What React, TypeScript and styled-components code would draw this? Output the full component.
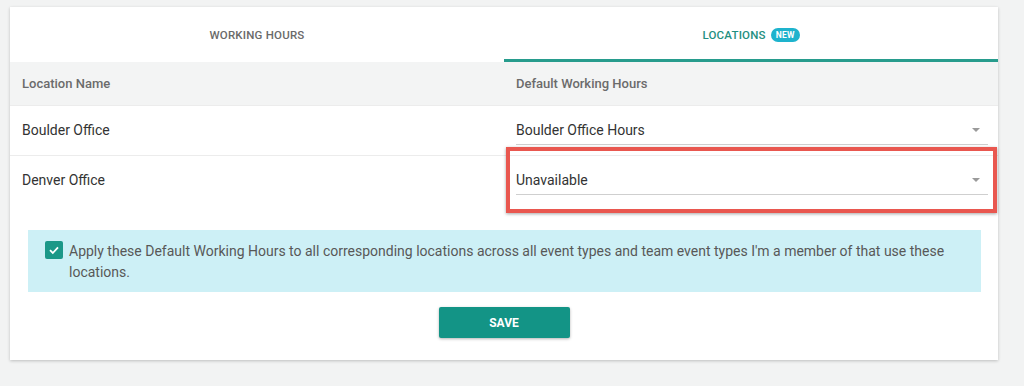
import React from "react";
import styled, { createGlobalStyle } from "styled-components";

const GlobalStyle = createGlobalStyle`
  body {
    margin: 0;
    background: #f2f3f3;
    font-family: Roboto, "Liberation Sans", Arial, sans-serif;
    -webkit-font-smoothing: antialiased;
  }
`;

const Page = styled.div`
  padding: 7px 26px 26px 10px;
`;

const Card = styled.div`
  background: #fff;
  box-shadow: 0 1px 3px rgba(0, 0, 0, 0.22);
  padding-bottom: 22px;
`;

const Tabs = styled.div`
  display: grid;
  grid-template-columns: 1fr 1fr;
`;

const Tab = styled.div<{ $active?: boolean }>`
  height: 55px;
  box-sizing: border-box;
  display: flex;
  align-items: center;
  justify-content: center;
  gap: 5px;
  font-size: 11.5px;
  font-weight: 500;
  letter-spacing: 0.2px;
  text-transform: uppercase;
  color: ${(p) => (p.$active ? "#1f8f81" : "#6a6a6a")};
  border-bottom: 3px solid ${(p) => (p.$active ? "#279c8d" : "transparent")};
  padding-top: 3px;
`;

const Badge = styled.span`
  background: #1eb3cd;
  color: #fff;
  font-size: 8.5px;
  font-weight: 700;
  border-radius: 8px;
  padding: 2px 5px;
  line-height: 10px;
`;

const Row = styled.div<{ $header?: boolean; $height: number; $line?: boolean }>`
  display: grid;
  grid-template-columns: 1fr 1fr;
  height: ${(p) => p.$height}px;
  background: ${(p) => (p.$header ? "#f3f4f4" : "#fff")};
  border-bottom: 1px solid ${(p) => (p.$line ? "#ececec" : "transparent")};
  box-sizing: border-box;
`;

const Cell = styled.div<{ $header?: boolean }>`
  position: relative;
  padding: 0 10px 0 12px;
  display: flex;
  align-items: ${(p) => (p.$header ? "center" : "flex-start")};
  padding-top: ${(p) => (p.$header ? 0 : 16)}px;
  font-size: ${(p) => (p.$header ? 13 : 14)}px;
  line-height: 16px;
  font-weight: ${(p) => (p.$header ? 500 : 400)};
  color: ${(p) => (p.$header ? "#6b6b6b" : "#333")};
`;

const Select = styled.div`
  flex: 1;
  display: flex;
  align-items: flex-start;
  justify-content: space-between;
  height: 22px;
  line-height: 16px;
  border-bottom: 1px solid #cfcfcf;
  font-size: 14px;
  color: #333;
`;

const Arrow = styled.span`
  width: 0;
  height: 0;
  margin-top: 6px;
  margin-right: 8px;
  border-left: 4px solid transparent;
  border-right: 4px solid transparent;
  border-top: 4px solid #9a9a9a;
`;

const Highlight = styled.div`
  position: absolute;
  top: -9px;
  left: 2px;
  right: 1px;
  height: 66px;
  border: 4px solid #e9574f;
  box-sizing: border-box;
  box-shadow: 0 1px 3px rgba(0, 0, 0, 0.35);
  pointer-events: none;
`;

const Notice = styled.label`
  display: flex;
  align-items: flex-start;
  gap: 6px;
  margin: 15px 17px 0 18px;
  padding: 11px 30px 9px 17px;
  background: #cdf0f6;
  font-size: 14px;
  line-height: 21px;
  color: #585858;
`;

const Check = styled.span`
  flex: none;
  width: 18px;
  height: 18px;
  border-radius: 2px;
  background: #1b9888;
  display: flex;
  align-items: center;
  justify-content: center;
`;

const Footer = styled.div`
  display: flex;
  justify-content: center;
  margin-top: 15px;
`;

const SaveButton = styled.button`
  width: 131px;
  height: 31px;
  border: none;
  border-radius: 2px;
  background: #139486;
  color: #fff;
  font-family: inherit;
  font-size: 12px;
  font-weight: 700;
  box-shadow: 0 1px 3px rgba(0, 0, 0, 0.3);
`;

const locations = [
  { name: "Boulder Office", hours: "Boulder Office Hours", height: 50, line: true },
  { name: "Denver Office", hours: "Unavailable", height: 59, highlight: true },
];

export default function App() {
  return (
    <Page>
      <GlobalStyle />
      <Card>
        <Tabs>
          <Tab>Working Hours</Tab>
          <Tab $active>
            Locations <Badge>NEW</Badge>
          </Tab>
        </Tabs>
        <Row $header $height={44} $line>
          <Cell $header>Location Name</Cell>
          <Cell $header>Default Working Hours</Cell>
        </Row>
        {locations.map((loc) => (
          <Row key={loc.name} $height={loc.height} $line={loc.line}>
            <Cell>{loc.name}</Cell>
            <Cell>
              <Select>
                {loc.hours}
                <Arrow />
              </Select>
              {loc.highlight && <Highlight />}
            </Cell>
          </Row>
        ))}
        <Notice>
          <Check>
            <svg width="12" height="12" viewBox="0 0 12 12">
              <path d="M2 6.2 L4.8 9 L10 3.4" fill="none" stroke="#fff" strokeWidth="1.8" />
            </svg>
          </Check>
          Apply these Default Working Hours to all corresponding locations across all event types
          and team event types I'm a member of that use these locations.
        </Notice>
        <Footer>
          <SaveButton>SAVE</SaveButton>
        </Footer>
      </Card>
    </Page>
  );
}
